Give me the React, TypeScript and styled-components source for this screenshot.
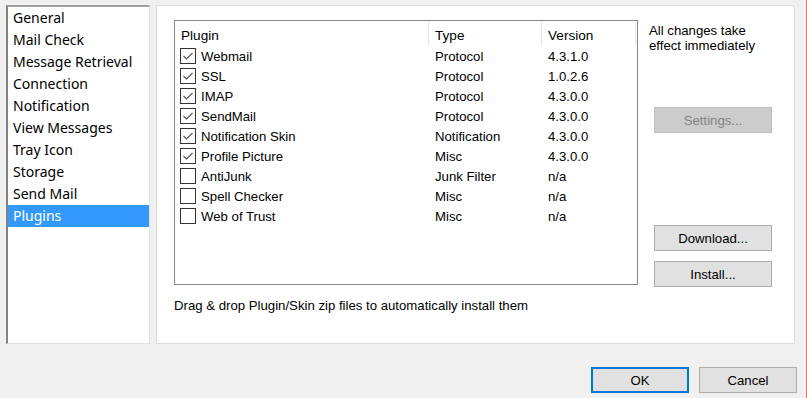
import { Fragment } from 'react';
import styled, { createGlobalStyle } from 'styled-components';

const Global = createGlobalStyle`
  html, body {
    margin: 0;
    padding: 0;
    background: #f0f0f0;
  }
`;

const Window = styled.div`
  width: 806px;
  height: 398px;
  border-right: 1px solid #f0733d;
  background: #f0f0f0;
  display: flex;
  flex-direction: column;
  font-family: 'Liberation Sans', Arial, sans-serif;
  font-size: 13.2px;
  color: #000;
`;

const Body = styled.div`
  display: flex;
  gap: 6px;
  padding: 5px 0 0 6px;
`;

const Sidebar = styled.ul`
  list-style: none;
  margin: 0;
  padding: 0;
  width: 141px;
  height: 336px;
  background: #fff;
  border-top: 2px solid #a0a0a0;
  border-left: 2px solid #828282;
  border-right: 1px solid #e3e3e3;
  border-bottom: 1px solid #e3e3e3;
  font-family: 'Noto Sans', 'Open Sans', sans-serif;
  font-size: 14px;
`;

const NavItem = styled.li<{ $active?: boolean }>`
  height: 22px;
  line-height: 22px;
  padding-left: 5px;
  background: ${(p) => (p.$active ? '#3399ff' : 'transparent')};
  color: ${(p) => (p.$active ? '#fff' : '#000')};
  white-space: nowrap;
`;

const Panel = styled.div`
  box-sizing: border-box;
  width: 639px;
  height: 339px;
  background: #fff;
  border: 1px solid #dcdcdc;
  display: flex;
  gap: 11px;
  padding: 14px 0 0 17px;
`;

const LeftCol = styled.div`
  display: flex;
  flex-direction: column;
`;

const Table = styled.div`
  width: 462px;
  height: 263px;
  border: 1px solid #828790;
  display: grid;
  grid-template-columns: 254px 113px 94px;
  grid-template-rows: 25px;
  grid-auto-rows: 20px;
  align-content: start;
`;

const HeadCell = styled.div`
  height: 24px;
  line-height: 29px;
  padding-left: 6px;
  border-right: 1px solid #e5e5e5;
  font-size: 13.6px;
`;

const Cell = styled.div<{ $check?: boolean }>`
  display: flex;
  align-items: center;
  gap: 5px;
  padding-left: ${(p) => (p.$check ? '5px' : '6px')};
  white-space: nowrap;
`;

const Box = styled.span`
  width: 14px;
  height: 14px;
  border: 1px solid #333;
  background: #fff;
  display: flex;
  align-items: center;
  justify-content: center;
  flex: none;
`;

const Hint = styled.div`
  margin-top: 13px;
`;

const RightCol = styled.div`
  display: flex;
  flex-direction: column;
  width: 124px;
`;

const Note = styled.div`
  line-height: 15px;
  margin-top: 3px;
`;

const Button = styled.button<{ $disabled?: boolean; $default?: boolean }>`
  box-sizing: border-box;
  width: 118px;
  height: 26px;
  font-family: 'Liberation Sans', Arial, sans-serif;
  font-size: 13.2px;
  padding: 0;
  background: ${(p) => (p.$disabled ? '#cccccc' : '#e1e1e1')};
  color: ${(p) => (p.$disabled ? '#838383' : '#000')};
  border: 1px solid ${(p) => (p.$disabled ? '#bfbfbf' : '#adadad')};
  ${(p) => p.$default && 'border: 2px solid #0078d7;'}
`;

const SettingsButton = styled(Button)`
  margin-top: 54px;
  margin-left: 5px;
`;

const DownloadButton = styled(Button)`
  margin-top: 92px;
  margin-left: 5px;
`;

const InstallButton = styled(Button)`
  margin-top: 10px;
  margin-left: 5px;
`;

const Footer = styled.div`
  display: flex;
  justify-content: flex-end;
  gap: 10px;
  padding: 23px 9px 0 0;
`;

const FooterButton = styled(Button)`
  width: 98px;
`;

const nav = [
  'General',
  'Mail Check',
  'Message Retrieval',
  'Connection',
  'Notification',
  'View Messages',
  'Tray Icon',
  'Storage',
  'Send Mail',
  'Plugins',
];

const plugins = [
  { name: 'Webmail', type: 'Protocol', version: '4.3.1.0', on: true },
  { name: 'SSL', type: 'Protocol', version: '1.0.2.6', on: true },
  { name: 'IMAP', type: 'Protocol', version: '4.3.0.0', on: true },
  { name: 'SendMail', type: 'Protocol', version: '4.3.0.0', on: true },
  { name: 'Notification Skin', type: 'Notification', version: '4.3.0.0', on: true },
  { name: 'Profile Picture', type: 'Misc', version: '4.3.0.0', on: true },
  { name: 'AntiJunk', type: 'Junk Filter', version: 'n/a', on: false },
  { name: 'Spell Checker', type: 'Misc', version: 'n/a', on: false },
  { name: 'Web of Trust', type: 'Misc', version: 'n/a', on: false },
];

function Check({ on }: { on: boolean }) {
  return (
    <Box>
      {on && (
        <svg width='12' height='12' viewBox='0 0 12 12'>
          <path d='M1.5 6 L4.5 9 L10.5 3' fill='none' stroke='#555' strokeWidth='1.1' />
        </svg>
      )}
    </Box>
  );
}

export default function App() {
  return (
    <Window>
      <Global />
      <Body>
        <Sidebar>
          {nav.map((n) => (
            <NavItem key={n} $active={n === 'Plugins'}>
              {n}
            </NavItem>
          ))}
        </Sidebar>
        <Panel>
          <LeftCol>
            <Table>
              <HeadCell>Plugin</HeadCell>
              <HeadCell>Type</HeadCell>
              <HeadCell>Version</HeadCell>
              {plugins.map((p) => (
                <Fragment key={p.name}>
                  <Cell $check>
                    <Check on={p.on} />
                    {p.name}
                  </Cell>
                  <Cell>{p.type}</Cell>
                  <Cell>{p.version}</Cell>
                </Fragment>
              ))}
            </Table>
            <Hint>Drag &amp; drop Plugin/Skin zip files to automatically install them</Hint>
          </LeftCol>
          <RightCol>
            <Note>
              All changes take
              <br />
              effect immediately
            </Note>
            <SettingsButton $disabled>Settings...</SettingsButton>
            <DownloadButton>Download...</DownloadButton>
            <InstallButton>Install...</InstallButton>
          </RightCol>
        </Panel>
      </Body>
      <Footer>
        <FooterButton $default>OK</FooterButton>
        <FooterButton>Cancel</FooterButton>
      </Footer>
    </Window>
  );
}
